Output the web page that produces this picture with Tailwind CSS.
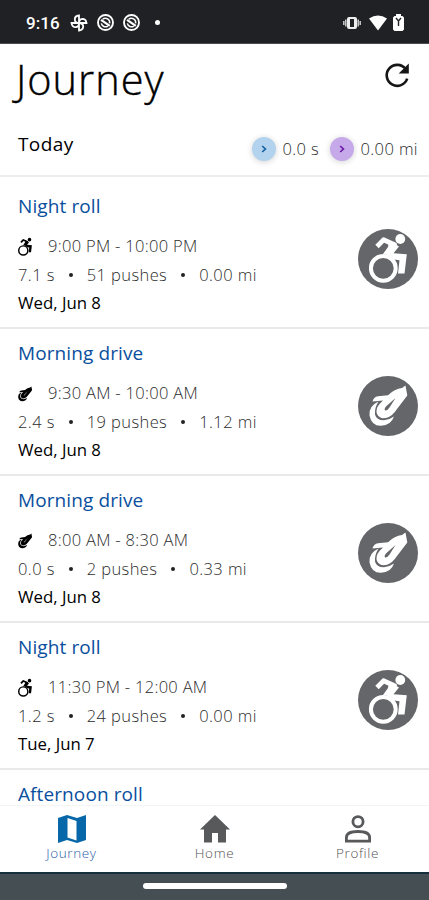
<!DOCTYPE html>
<html lang="en">
<head>
<meta charset="utf-8">
<title>Journey</title>
<script src="https://cdn.jsdelivr.net/npm/@tailwindcss/browser@4"></script>
</head>
<body class="w-[429px] h-[900px] overflow-hidden bg-white font-['Open_Sans','Noto_Sans',sans-serif] text-black">
<svg class="hidden">
  <symbol id="chair" viewBox="0 0 60 60">
    <circle cx="42.3" cy="10" r="4.9" fill="currentColor"/>
    <path d="M19 17.5L25.5 10.8L36.5 15.8L29.5 24.5" fill="none" stroke="currentColor" stroke-width="4.8" stroke-linejoin="round"/>
    <path d="M31 11.5L41 17.5L35.5 24.2L48.8 25.2L46.5 44.5H40L41.5 31.2L36 30.5Q32 25.5 25 25L30 18Z" fill="currentColor"/>
    <circle cx="25.3" cy="39.3" r="12.4" fill="none" stroke="currentColor" stroke-width="4"/>
  </symbol>
  <symbol id="drive" viewBox="0 0 60 60">
    <path d="M47.5 9.5L49.3 19.5L39 33Q34.5 40 29 41.7Q21.5 43.5 19 38Q17.3 33 21.5 28L25 24.5L14.5 25.5Q15.5 21 20 20.3L30 19.3Q36.5 12.8 44 12Z" fill="currentColor"/>
    <path d="M20.5 25.5Q10.5 30 11.5 39.5Q13.5 50 23 49.8Q33 49.5 36 40.5Q31 44 26 44.3Q18.5 44.4 17 38.5Q16.4 32 20.5 25.5Z" fill="currentColor"/>
    <path d="M37.5 22L28.5 30Q25.8 32.5 27 34.5Q29.5 34.8 31.5 31.5Z" class="fill-[#65666a]"/>
  </symbol>
  <symbol id="target" viewBox="0 0 20 20">
    <circle cx="10" cy="10" r="7.9" fill="none" stroke="currentColor" stroke-width="2"/>
    <path d="M5.6 11A4.5 4.5 0 0 0 12.5 13.7M7 6.6A4.5 4.5 0 0 1 14.3 11" fill="none" stroke="currentColor" stroke-width="1.6"/>
    <path d="M5.3 7.2L14.5 13.5" stroke="currentColor" stroke-width="2.4"/>
  </symbol>
</svg>
<div class="flex h-full flex-col">
  <header class="flex h-[44px] shrink-0 items-center border-b border-[#4a4a55] bg-[#202125] pl-[26px] pr-[24px] pt-[2px] text-white">
    <span class="w-[44px] whitespace-nowrap font-[Roboto] text-[17px] font-medium leading-5 tracking-[0.1px]">9:16</span>
    <svg class="size-[18px] mr-[8px]" viewBox="0 0 18 18" fill="none" stroke="currentColor" stroke-width="1.8"><path d="M9 9V1.5Q4.6 2 4.8 5.7Q5 8.8 9 9ZM9 9H16.5Q16 4.8 12.3 4.8Q9.2 5 9 9ZM9 9V16.5Q13.4 16 13.2 12.3Q13 9.2 9 9ZM9 9H1.5Q2 13.2 5.7 13.2Q8.8 13 9 9Z"/></svg>
    <svg class="size-[19px] mr-[7px]"><use href="#target"/></svg>
    <svg class="size-[19px] mr-[14px]"><use href="#target"/></svg>
    <span class="size-[5px] rounded-full bg-white"></span>
    <svg class="ml-auto h-[14px] w-[18px]" viewBox="0 0 18 14"><rect x="4" y="1" width="10" height="12" rx="2" fill="#eee"/><path d="M2.8 3.5V10.5M15.2 3.5V10.5M.8 5V9M17.2 5V9" stroke="#ccc" stroke-width="1.5"/><rect x="7" y="3" width="4" height="8" fill="#202125"/></svg>
    <svg class="ml-[8px] h-[16px] w-[18px]" viewBox="0 0 18 16"><path d="M0 3.4Q9-2.4 18 3.4L9 15.5Z" fill="#fff"/></svg>
    <svg class="ml-[6px] mr-[1px] h-[17px] w-[11px]" viewBox="0 0 11 17"><path d="M3 0H8V2H9.5L11 3.5V15.5L9.5 17H1.5L0 15.5V3.5L1.5 2H3Z" fill="#fff"/><path d="M3 4L5.5 7L8 4M5.5 7V12" stroke="#202125" stroke-width="1.4" fill="none"/></svg>
  </header>
  <main class="min-h-0 flex-1 overflow-hidden">
    <div class="flex h-[76px] items-start justify-between pl-[16px] pr-[17px]">
      <h1 class="pt-[9px] text-[41.5px] font-light leading-[52px] tracking-[1px] [-webkit-text-stroke:0.4px_#000]">Journey</h1>
      <svg class="mt-[16px] size-[30px]" viewBox="0 0 30 30"><path d="M23.6 9A10.5 10.5 0 1 0 25.2 18.6" fill="none" stroke="#161616" stroke-width="2.6"/><path d="M26.8 3.5V13.6H16.7Z" fill="#161616"/></svg>
    </div>
    <div class="flex h-[57px] items-center border-b-2 border-[#eeeeee] pl-[18px] pr-[11px] pt-[3px]">
      <span class="-mt-[10px] text-[19px] tracking-[0.4px]">Today</span>
      <span class="ml-auto mr-[6px] flex size-[24px] items-center justify-center rounded-full bg-[#b3d2ee] shadow-[0_1px_6px_rgba(0,0,0,0.18)]"><svg class="size-[8px]" viewBox="0 0 8 8"><path d="M2.2 1L5.4 4L2.2 7" fill="none" stroke="#1761a3" stroke-width="1.7"/></svg></span>
      <span class="w-[48px] whitespace-nowrap text-[16.5px] font-light tracking-[0.4px] text-[#2c2c2c]">0.0 s</span>
      <span class="mr-[6px] flex size-[24px] items-center justify-center rounded-full bg-[#c6a9e8] shadow-[0_1px_6px_rgba(0,0,0,0.18)]"><svg class="size-[8px]" viewBox="0 0 8 8"><path d="M2.2 1L5.4 4L2.2 7" fill="none" stroke="#6b1bab" stroke-width="1.7"/></svg></span>
      <span class="whitespace-nowrap text-[16.5px] font-light tracking-[0.4px] text-[#2c2c2c]">0.00 mi</span>
    </div>
    <div id="list" class="pt-[5px]"></div>
  </main>
  <nav class="grid h-[67px] shrink-0 grid-cols-3 border-t border-[#f4f4f4] bg-white pt-[7px] text-[13.5px] font-light leading-[17px] tracking-[0.6px] text-[#555]">
    <div class="flex flex-col items-center text-[#2c60a8]">
      <svg class="size-[32px]" viewBox="0 0 32 32"><path d="M2 5L11 2L21 5L30 2V27L21 30L11 27L2 30ZM11.5 5V24.5L20.5 27.5V8Z" fill="#0767a8" fill-rule="evenodd"/></svg>
      <span>Journey</span>
    </div>
    <div class="flex flex-col items-center">
      <svg class="size-[32px]" viewBox="0 0 32 32"><path d="M16 2L31 16.5H27V29.5H19V20H13V29.5H5V16.5H1Z" fill="#58595b"/></svg>
      <span>Home</span>
    </div>
    <div class="flex flex-col items-center">
      <svg class="size-[32px]" viewBox="0 0 32 32" fill="none" stroke="#58595b" stroke-width="2.8"><circle cx="16" cy="8.7" r="5.1"/><path d="M4.4 28.1V24.5Q4.4 18.5 16 18.5T27.6 24.5V28.1Z"/></svg>
      <span>Profile</span>
    </div>
  </nav>
  <footer class="flex h-[28px] shrink-0 justify-center border-t-2 border-[#16303c] bg-[#454e52] pt-[9px]"><span class="h-[6px] w-[144px] rounded-full bg-white"></span></footer>
</div>
<template id="row">
  <article class="flex h-[147px] items-center border-b-2 border-[#e9e9e9] pl-[18px] pr-[11px]">
    <div class="flex h-full flex-1 flex-col whitespace-nowrap pt-[12px]">
      <h2 class="h-[40px] text-[19px] leading-[25px] tracking-[0.1px] text-[#0a4f9e]"></h2>
      <p class="flex h-[25px] items-center text-[16.5px] font-light tracking-[0.3px] text-[#2c2c2c]"><svg class="small -ml-[4px] mr-[12px] size-[22px] text-black"><use/></svg><span class="time"></span></p>
      <p class="stats flex h-[32px] items-center text-[16.5px] font-light tracking-[0.4px] text-[#2c2c2c]"><span></span><i class="mx-[14px] size-[4px] rounded-full bg-[#222]"></i><span></span><i class="mx-[14px] size-[4px] rounded-full bg-[#222]"></i><span></span></p>
      <p class="date h-[24px] text-[16.8px] leading-[24px]"></p>
    </div>
    <span class="mt-[8px] size-[60px] rounded-full bg-[#65666a] text-white"><svg class="size-[60px]"><use/></svg></span>
  </article>
</template>
<script>
const trips = [
  ["Night roll", "chair", "9:00 PM - 10:00 PM", "7.1 s", "51 pushes", "0.00 mi", "Wed, Jun 8"],
  ["Morning drive", "drive", "9:30 AM - 10:00 AM", "2.4 s", "19 pushes", "1.12 mi", "Wed, Jun 8"],
  ["Morning drive", "drive", "8:00 AM - 8:30 AM", "0.0 s", "2 pushes", "0.33 mi", "Wed, Jun 8"],
  ["Night roll", "chair", "11:30 PM - 12:00 AM", "1.2 s", "24 pushes", "0.00 mi", "Tue, Jun 7"],
  ["Afternoon roll", "chair", "", "", "", "", ""]
];
for (const [title, icon, time, duration, pushes, distance, date] of trips) {
  const row = document.getElementById("row").content.cloneNode(true);
  row.querySelector("h2").textContent = title;
  row.querySelectorAll("use").forEach(u => u.setAttribute("href", "#" + icon));
  row.querySelector(".time").textContent = time;
  const cells = row.querySelectorAll(".stats span");
  [duration, pushes, distance].forEach((t, i) => cells[i].textContent = t);
  row.querySelector(".date").textContent = date;
  document.getElementById("list").append(row);
}
</script>
</body>
</html>
